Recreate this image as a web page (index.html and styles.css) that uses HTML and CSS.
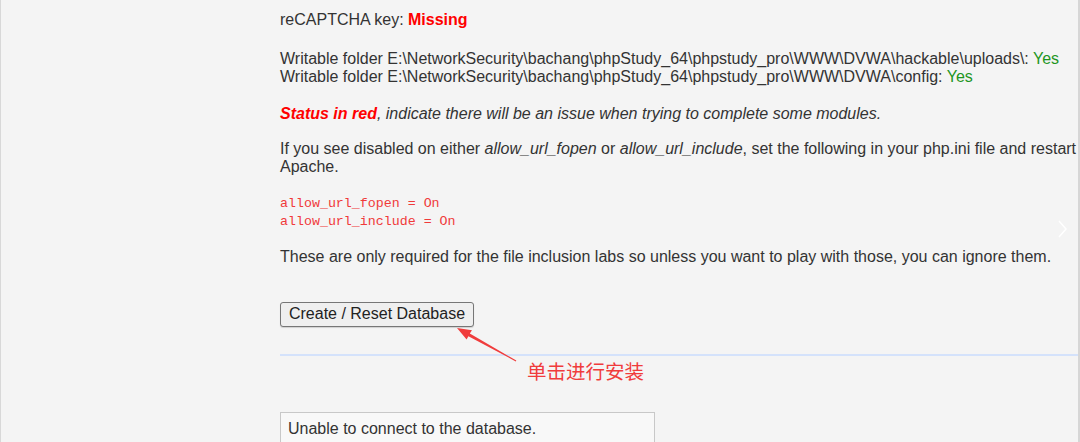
FILE: index.html
```html
<!DOCTYPE html>
<html>
<head>
<meta charset="utf-8">
<link rel="stylesheet" href="styles.css">
</head>
<body>
<div class="page">
  <div class="side"></div>
  <div class="main">
    <p class="key">reCAPTCHA key: <span class="bad">Missing</span></p>
    <p>Writable folder E:\NetworkSecurity\bachang\phpStudy_64\phpstudy_pro\WWW\DVWA\hackable\uploads\: <span class="ok">Yes</span><br>Writable folder E:\NetworkSecurity\bachang\phpStudy_64\phpstudy_pro\WWW\DVWA\config: <span class="ok">Yes</span></p>
    <p class="note"><span class="bad">Status in red</span>, indicate there will be an issue when trying to complete some modules.</p>
    <p>If you see disabled on either <em>allow_url_fopen</em> or <em>allow_url_include</em>, set the following in your php.ini file and restart Apache.</p>
    <p class="code">allow_url_fopen = On<br>allow_url_include = On</p>
    <p>These are only required for the file inclusion labs so unless you want to play with those, you can ignore them.</p>
    <div class="form"><button class="btn">Create / Reset Database</button></div>
    <div class="rule"></div>
    <div class="msg">Unable to connect to the database.</div>
  </div>
</div>
<svg class="arrow" width="100" height="50" viewBox="0 0 100 50"><polygon points="17,8 32,10.2 29.8,13.4 76.3,40.6 75.8,41.4 28.4,16.2 26.6,19.6" fill="#f03c3c"/></svg>
<div class="annot">单击进行安装</div>
<svg class="chev" width="12" height="20" viewBox="0 0 12 20"><polyline points="2,2 9,10 2,18" fill="none" stroke="#ffffff" stroke-width="1.5"/></svg>
</body>
</html>
```
FILE: styles.css
```css
html, body {
  margin: 0;
  padding: 0;
  background: #f4f4f4;
  height: 442px;
  overflow: hidden;
}
body {
  position: relative;
  font-family: "Liberation Sans", Arial, sans-serif;
  font-size: 16px;
  line-height: 17.8px;
  color: #333333;
}
.page {
  display: flex;
  height: 442px;
  border-left: 1px solid #d8d8d8;
}
.side {
  width: 279px;
  flex: none;
}
.main {
  flex: 1;
  padding-top: 11px;
  border-right: 2px solid #d6d6d6;
}
.main p {
  margin: 0 0 19.2px 0;
}
.main p.key {
  margin-bottom: 21px;
}
.main p.note {
  margin-bottom: 18px;
}
.main p.code {
  margin-bottom: 17px;
}
.bad {
  color: #ff0000;
  font-weight: bold;
}
.ok {
  color: #1e961e;
}
.note {
  font-style: italic;
}
.code {
  font-family: "Liberation Mono", "Courier New", monospace;
  font-size: 13.3px;
  line-height: 17.8px;
  color: #f03a3a;
}
.form {
  padding-top: 17px;
}
.btn {
  font-family: "Liberation Sans", Arial, sans-serif;
  font-size: 16px;
  color: #222222;
  background: #efefef;
  border: 1px solid #767676;
  border-radius: 3px;
  height: 25px;
  width: 194px;
  padding: 0;
  box-shadow: 0 1px 1px rgba(0,0,0,0.15);
}
.rule {
  height: 2px;
  background: #d4e2fb;
  margin-top: 27px;
}
.msg {
  margin-top: 56px;
  width: 366px;
  border: 1px solid #c8c8c8;
  background: #f8f8f8;
  padding: 7px 0 8px 7px;
  line-height: 18px;
}
.arrow {
  position: absolute;
  left: 440px;
  top: 320px;
}
.annot {
  position: absolute;
  left: 527px;
  top: 358px;
  font-family: "Noto Sans CJK SC", sans-serif;
  font-size: 19.5px;
  line-height: 26px;
  color: #f03c3c;
}
.chev {
  position: absolute;
  left: 1057px;
  top: 219px;
}
```
